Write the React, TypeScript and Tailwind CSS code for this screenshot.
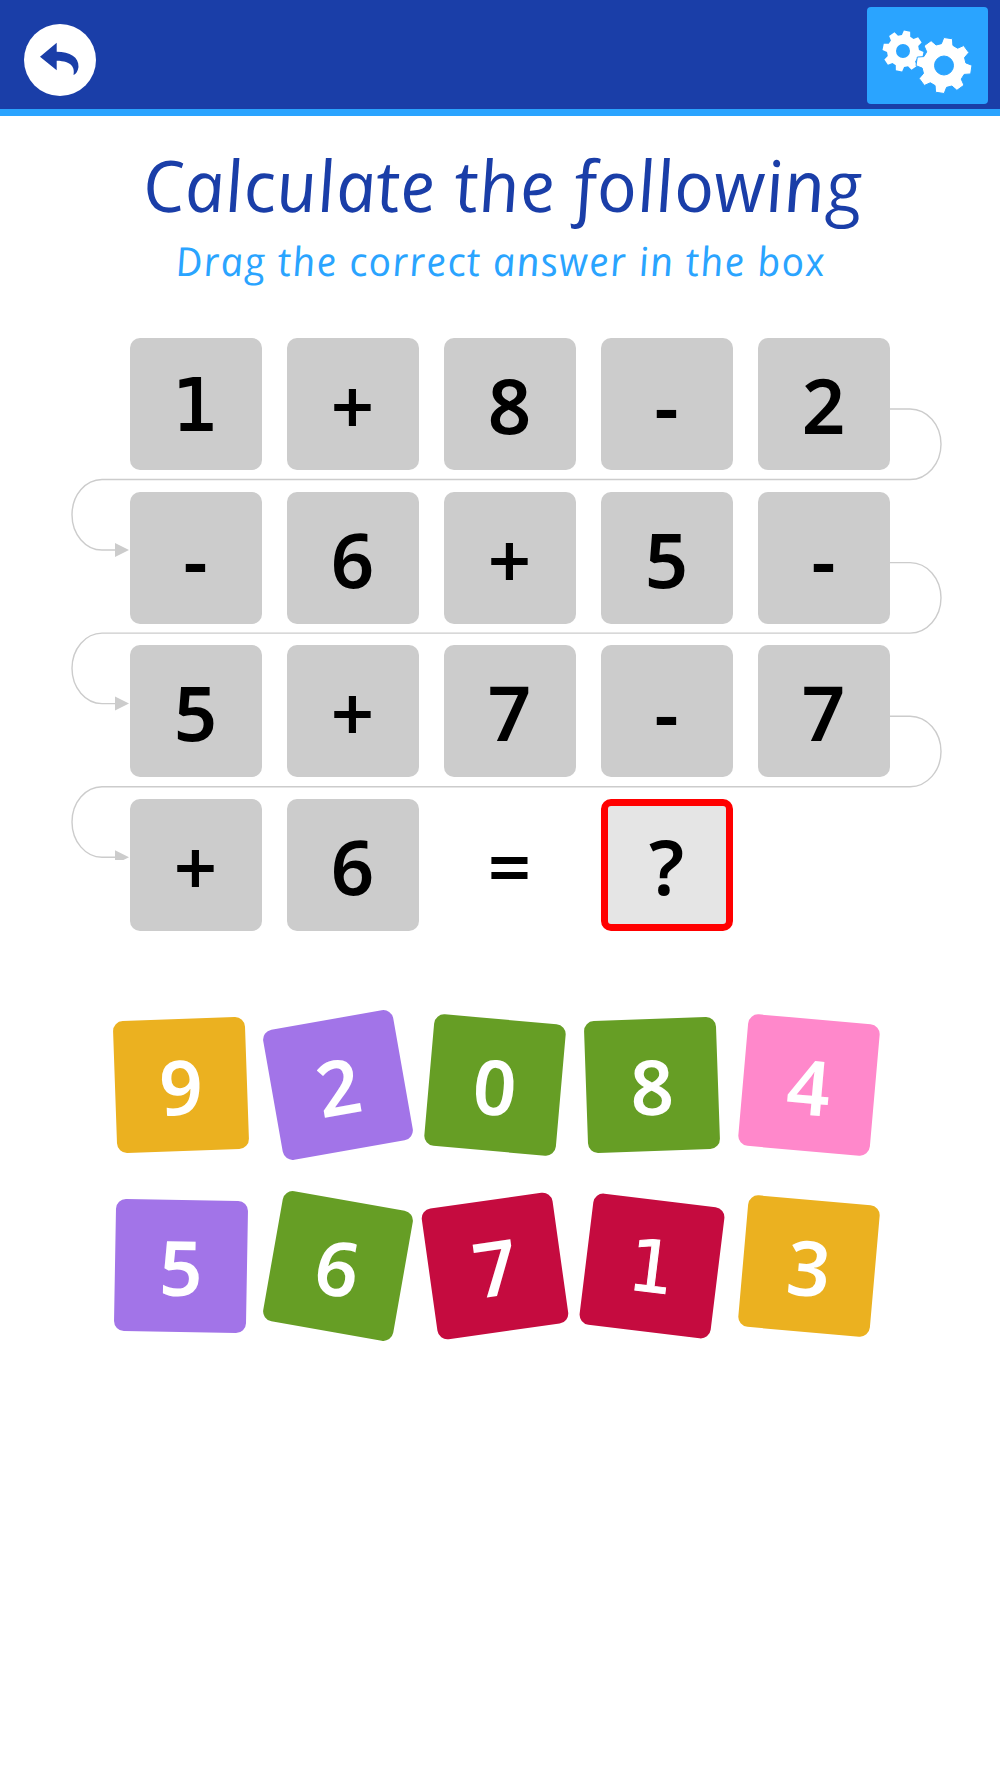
const gearPath = (cx: number, cy: number, ro: number, ri: number, hole: number, n: number, rot = 0) => {
  let d = "";
  const step = (Math.PI * 2) / n;
  for (let i = 0; i < n; i++) {
    const a = rot + i * step;
    const pts: [number, number][] = [
      [ri, a - step * 0.34],
      [ro, a - step * 0.2],
      [ro, a + step * 0.2],
      [ri, a + step * 0.34],
    ];
    pts.forEach(([r, t], j) => {
      const x = (cx + r * Math.cos(t)).toFixed(2);
      const y = (cy + r * Math.sin(t)).toFixed(2);
      d += `${i === 0 && j === 0 ? "M" : "L"}${x} ${y} `;
    });
  }
  d += `Z M${cx + hole} ${cy} A${hole} ${hole} 0 1 0 ${cx - hole} ${cy} A${hole} ${hole} 0 1 0 ${cx + hole} ${cy} Z`;
  return d;
};

function Gears() {
  return (
    <svg width="121" height="97" viewBox="867 7 121 97" className="block">
      <path d={gearPath(903, 51, 20.5, 16, 7, 8, 0.2)} fill="#fff" fillRule="evenodd" />
      <path d={gearPath(944, 65.5, 28, 22, 9.5, 8, 0.15)} fill="#fff" fillRule="evenodd" stroke="#2aa4ff" strokeWidth="1" />
    </svg>
  );
}

function BackIcon() {
  return (
    <svg width="72" height="72" viewBox="24 24 72 72" className="block">
      <circle cx="60" cy="60" r="36" fill="#fff" />
      <path d="M40 56.7 L56.7 42.7 V51.7 C70 51.7 79 57 78.5 67 C78 71 76 74 73.5 75 C75 68 72 61 56.7 60.8 V70.3 Z" fill="#1a3ea8" />
    </svg>
  );
}

function Connectors() {
  const ys = [0, 153.6, 307.2];
  return (
    <svg width="1000" height="540" viewBox="0 320 1000 540" className="absolute left-0 top-0 pointer-events-none" fill="none">
      {ys.map((o) => (
        <g key={o} transform={`translate(0 ${o})`}>
          <path
            d="M890 409 H910 A31 35.25 0 0 1 910 479.5 H102 A30 35.25 0 0 0 102 550 H116"
            stroke="#cccccc"
            strokeWidth="1.4"
          />
          <path d="M115 543 L129 550 L115 557 Z" fill="#cccccc" />
        </g>
      ))}
    </svg>
  );
}

function Glyph({ v, white }: { v: string; white?: boolean }) {
  if (v === "1") {
    return (
      <span
        className={`relative top-[1px] font-['DejaVu_Sans',sans-serif] font-normal text-[72px] ${
          white ? "[-webkit-text-stroke:1px_white]" : "[-webkit-text-stroke:2px_black]"
        }`}
      >
        1
      </span>
    );
  }
  return <span className="relative top-[1px]">{v}</span>;
}

function Tile({ v }: { v: string }) {
  return (
    <div className="w-[132px] h-[132px] rounded-[10px] bg-[#cccccc] flex items-center justify-center text-black text-[76px] font-semibold leading-none">
      <Glyph v={v} />
    </div>
  );
}

const rows = [
  ["1", "+", "8", "-", "2"],
  ["-", "6", "+", "5", "-"],
  ["5", "+", "7", "-", "7"],
];

const answers: { v: string; bg: string; rot: string }[] = [
  { v: "9", bg: "bg-[#ebb120]", rot: "-rotate-2" },
  { v: "2", bg: "bg-[#a274e8]", rot: "-rotate-[10deg]" },
  { v: "0", bg: "bg-[#669e25]", rot: "rotate-[5deg]" },
  { v: "8", bg: "bg-[#669e25]", rot: "-rotate-2" },
  { v: "4", bg: "bg-[#ff88cb]", rot: "rotate-[5deg]" },
  { v: "5", bg: "bg-[#a274e8]", rot: "rotate-1" },
  { v: "6", bg: "bg-[#669e25]", rot: "rotate-[10deg]" },
  { v: "7", bg: "bg-[#c50b3f]", rot: "-rotate-[8deg]" },
  { v: "1", bg: "bg-[#c50b3f]", rot: "rotate-[7deg]" },
  { v: "3", bg: "bg-[#ebb120]", rot: "rotate-[5deg]" },
];

export default function App() {
  return (
    <div className="relative w-[1000px] min-h-[1778px] bg-white font-['Noto_Sans',sans-serif]">
      <header className="h-[116px] bg-[#1a3ea8] border-b-[7px] border-[#2aa4ff] flex items-center justify-between pl-[24px] pr-[12px]">
        <div className="mt-[11px]">
          <BackIcon />
        </div>
        <button className="w-[121px] h-[97px] rounded-[4px] bg-[#2aa4ff] mt-[2px]">
          <Gears />
        </button>
      </header>

      <div className="text-center font-['Open_Sans',sans-serif] italic">
        <h1 className="pt-[19px] text-[71px] leading-[100px] text-[#1a3ea8] tracking-[0.4px] skew-x-[8deg]">Calculate the following</h1>
        <p className="mt-[1px] text-[40px] leading-[50px] text-[#2aa4ff] tracking-[1.2px] skew-x-[8deg]">Drag the correct answer in the box</p>
      </div>

      <div className="absolute left-0 top-[320px] w-[1000px] pl-[129.5px] pt-[18px]">
        <Connectors />
        <div className="relative flex flex-col gap-[21.6px]">
          {rows.map((r, i) => (
            <div key={i} className="flex gap-[25px]">
              {r.map((v, j) => (
                <Tile key={j} v={v} />
              ))}
            </div>
          ))}
          <div className="flex gap-[25px]">
            <Tile v="+" />
            <Tile v="6" />
            <div className="w-[132px] h-[132px] flex items-center justify-center text-black text-[76px] font-semibold leading-none">
              <span className="relative top-[1px]">=</span>
            </div>
            <div className="w-[132px] h-[132px] rounded-[10px] bg-[#e5e5e5] border-[7px] border-[#ff0000] flex items-center justify-center text-black text-[76px] font-semibold leading-none">
              <span className="relative top-[1px]">?</span>
            </div>
          </div>
        </div>

        <div className="relative -ml-[14.5px] mt-[88px] grid grid-cols-[repeat(5,132px)] gap-x-[25px] gap-y-[49px]">
          {answers.map((a) => (
            <div
              key={a.v}
              className={`w-[132px] h-[132px] rounded-[10px] ${a.bg} ${a.rot} flex items-center justify-center text-white text-[76px] font-semibold leading-none`}
            >
              <Glyph v={a.v} white />
            </div>
          ))}
        </div>
      </div>
    </div>
  );
}
